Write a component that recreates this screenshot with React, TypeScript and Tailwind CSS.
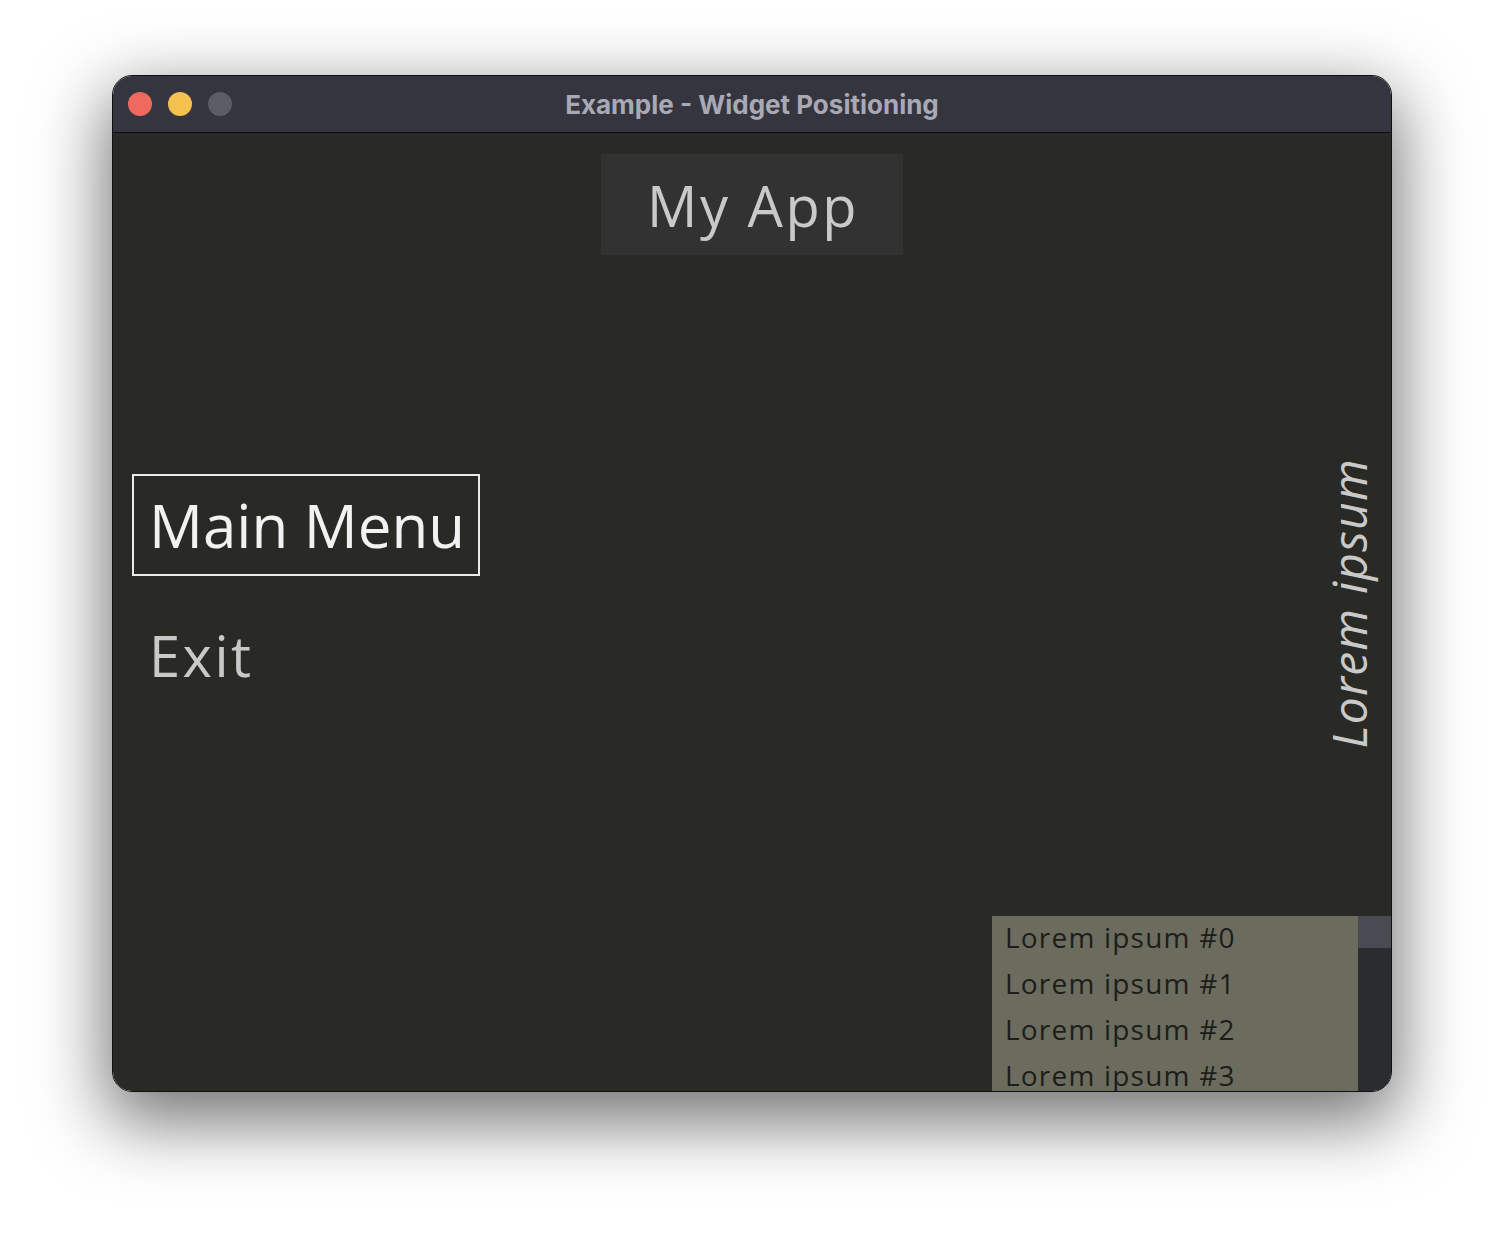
export default function App() {
  const rows = ['Lorem ipsum #0', 'Lorem ipsum #1', 'Lorem ipsum #2', 'Lorem ipsum #3', 'Lorem ipsum #4'];

  return (
    <div className="flex min-h-[1240px] w-full justify-center bg-white pt-[75px]">
      {/* Window */}
      <div className="flex h-[1017px] w-[1280px] flex-col overflow-hidden rounded-[20px] border border-[#101010] shadow-[0_24px_70px_6px_rgba(0,0,0,0.55)]">
        {/* Title bar */}
        <div className="relative flex h-[57px] shrink-0 items-center border-b border-[#0c0c0c] bg-[#35353f] px-[15px]">
          <div className="flex gap-[16px]">
            <span className="h-[24px] w-[24px] rounded-full bg-[#ee6a5f]" />
            <span className="h-[24px] w-[24px] rounded-full bg-[#f5c14e]" />
            <span className="h-[24px] w-[24px] rounded-full bg-[#5c5c66]" />
          </div>
          <div className="-ml-[104px] flex-1 text-center font-['Inter',sans-serif] text-[26px] font-bold text-[#a9a9b6]">
            Example - Widget Positioning
          </div>
        </div>

        {/* Content */}
        <div className="flex flex-1 flex-col overflow-hidden bg-[#292a25] font-['Open_Sans',sans-serif]">
          <div className="mt-[21px] flex h-[101px] w-[302px] shrink-0 items-center justify-center self-center bg-[#323232] pl-[2px] text-[56px] tracking-[2.5px] text-[#c9c9c9]">
            My App
          </div>

          <div className="flex h-[661px] shrink-0 items-start justify-between">
            <div className="ml-[19px] mt-[219px] flex flex-col">
              <div className="flex h-[102px] w-[348px] items-center border-2 border-[#ebebeb] pl-[15px] text-[60px] text-[#f2f2f2]">
                Main Menu
              </div>
              <div className="mt-[28px] flex h-[102px] items-center pl-[17px] text-[56px] tracking-[2.5px] text-[#c9c9c9]">
                Exit
              </div>
            </div>
            <div className="mr-[6px] mt-[203px] rotate-180 text-[48px] italic tracking-[1.2px] text-[#c9c9c9] [writing-mode:vertical-rl]">
              Lorem ipsum
            </div>
          </div>

          <div className="flex w-[399px] shrink-0 self-end">
            <div className="flex w-[366px] flex-col bg-[#6b6c5e] pl-[13px]">
              {rows.map((r) => (
                <div key={r} className="h-[46px] text-[28px] leading-[42px] tracking-[1.2px] text-[#1d1d1a]">
                  {r}
                </div>
              ))}
            </div>
            <div className="flex w-[33px] flex-col bg-[#2b2c30]">
              <div className="h-[32px] bg-[#4a4b52]" />
            </div>
          </div>
        </div>
      </div>
    </div>
  );
}
